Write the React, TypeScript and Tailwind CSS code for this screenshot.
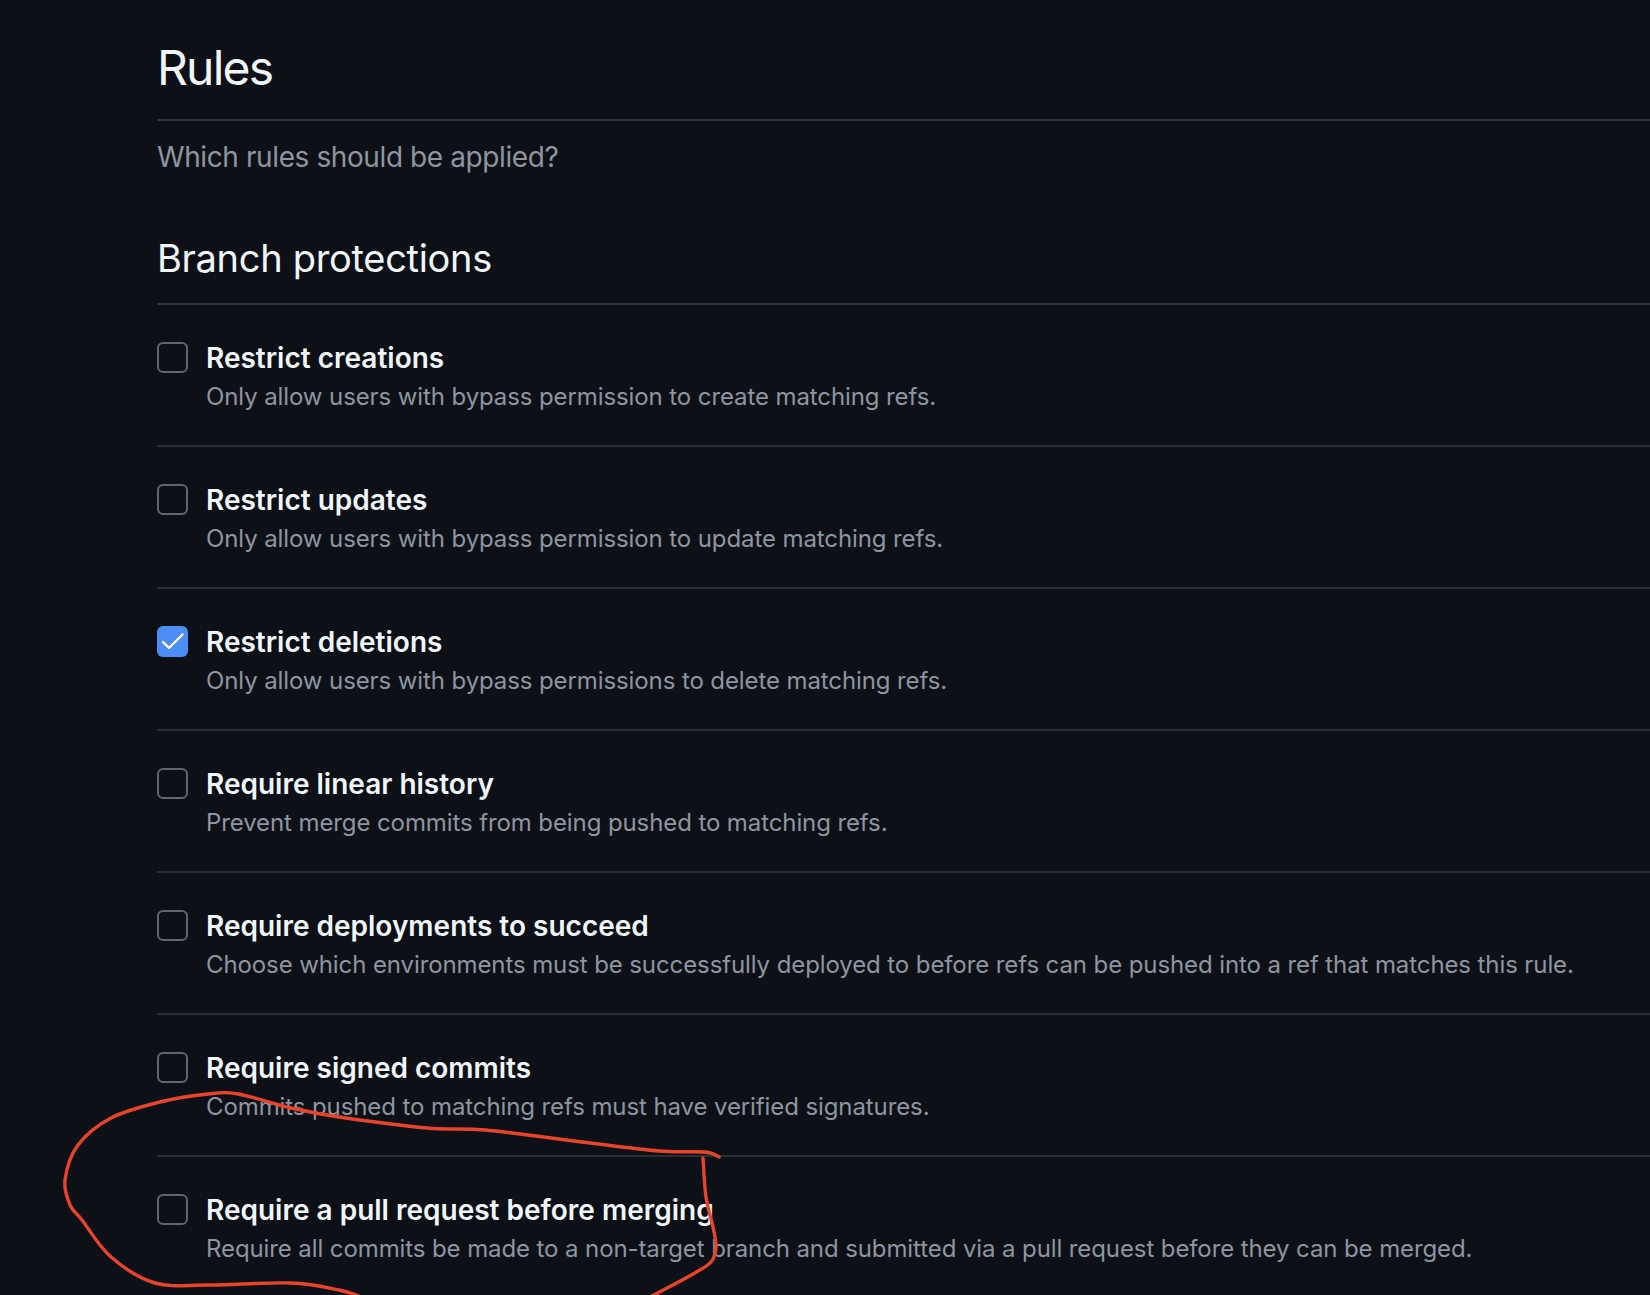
import React from "react";

type Rule = { title: string; desc: string; checked?: boolean };

const rules: Rule[] = [
  { title: "Restrict creations", desc: "Only allow users with bypass permission to create matching refs." },
  { title: "Restrict updates", desc: "Only allow users with bypass permission to update matching refs." },
  { title: "Restrict deletions", desc: "Only allow users with bypass permissions to delete matching refs.", checked: true },
  { title: "Require linear history", desc: "Prevent merge commits from being pushed to matching refs." },
  {
    title: "Require deployments to succeed",
    desc: "Choose which environments must be successfully deployed to before refs can be pushed into a ref that matches this rule.",
  },
  { title: "Require signed commits", desc: "Commits pushed to matching refs must have verified signatures." },
  {
    title: "Require a pull request before merging",
    desc: "Require all commits be made to a non-target branch and submitted via a pull request before they can be merged.",
  },
];

function smooth(pts: [number, number][]): string {
  let d = `M ${pts[0][0]} ${pts[0][1]}`;
  for (let i = 0; i < pts.length - 1; i++) {
    const p0 = pts[i - 1] || pts[i];
    const p1 = pts[i];
    const p2 = pts[i + 1];
    const p3 = pts[i + 2] || p2;
    const c1x = p1[0] + (p2[0] - p0[0]) / 6;
    const c1y = p1[1] + (p2[1] - p0[1]) / 6;
    const c2x = p2[0] - (p3[0] - p1[0]) / 6;
    const c2y = p2[1] - (p3[1] - p1[1]) / 6;
    d += ` C ${c1x.toFixed(1)} ${c1y.toFixed(1)} ${c2x.toFixed(1)} ${c2y.toFixed(1)} ${p2[0]} ${p2[1]}`;
  }
  return d;
}

const loop: [number, number][] = [
  [719, 1157], [705, 1152], [659, 1151], [582, 1142], [485, 1130], [427, 1128], [339, 1117],
  [291, 1108], [238, 1094], [208, 1094], [160, 1102], [111, 1118], [78, 1145], [65, 1180],
  [70, 1205], [82, 1220], [111, 1257], [155, 1283], [208, 1285], [291, 1283], [339, 1290], [364, 1298],
];
const tail: [number, number][] = [
  [703, 1158], [706, 1197], [713, 1227], [716, 1247], [711, 1262], [693, 1274], [669, 1287], [648, 1298],
];

function Checkbox({ checked }: { checked?: boolean }) {
  if (checked) {
    return (
      <div className="mt-[2px] flex h-[31px] w-[31px] shrink-0 items-center justify-center rounded-[6px] bg-[#4c8ef6]">
        <svg width="31" height="31" viewBox="0 0 31 31" fill="none">
          <path d="M6 16 L12 22 L25.5 8.5" stroke="#ffffff" strokeWidth="2.4" strokeLinecap="round" strokeLinejoin="round" />
        </svg>
      </div>
    );
  }
  return <div className="mt-[2px] h-[31px] w-[31px] shrink-0 rounded-[6px] border-2 border-[#5f666f]" />;
}

export default function App() {
  return (
    <div
      className="relative min-h-[1295px] w-full overflow-hidden bg-[#0d1117] pl-[157px]"
      style={{ fontFamily: "Inter, 'Noto Sans', 'Liberation Sans', sans-serif" }}
    >
      <div className="border-b-2 border-[#30363d] pt-[38px] pb-[21px]">
        <h2 className="text-[48px] leading-[60px] font-normal tracking-[-1.8px] text-[#f0f6fc]">Rules</h2>
      </div>
      <p className="mt-[16px] text-[28px] leading-[40px] tracking-[-0.4px] text-[#8d96a0]">Which rules should be applied?</p>
      <div className="mt-[57px] border-b-2 border-[#30363d] pb-[20px]">
        <h3 className="text-[38px] leading-[49px] font-normal tracking-[-0.3px] text-[#f0f6fc]">Branch protections</h3>
      </div>
      <div>
        {rules.map((r, i) => (
          <div
            key={r.title}
            className={`flex gap-[18px] pt-[35px] pb-[32px] ${i > 0 ? "border-t-2 border-[#2a2f36]" : ""}`}
          >
            <Checkbox checked={r.checked} />
            <div className="flex flex-col">
              <div className="text-[28px] leading-[36px] font-semibold text-[#f0f6fc]">{r.title}</div>
              <div className="mt-[5px] text-[24px] leading-[32px] tracking-[-0.1px] text-[#8d96a0]">{r.desc}</div>
            </div>
          </div>
        ))}
      </div>
      <svg className="pointer-events-none absolute left-0 top-0" width="1650" height="1295" viewBox="0 0 1650 1295" fill="none">
        <path d={smooth(loop)} stroke="#e8442b" strokeWidth="3.4" strokeLinecap="round" strokeLinejoin="round" />
        <path d={smooth(tail)} stroke="#e8442b" strokeWidth="3.4" strokeLinecap="round" strokeLinejoin="round" />
      </svg>
    </div>
  );
}
